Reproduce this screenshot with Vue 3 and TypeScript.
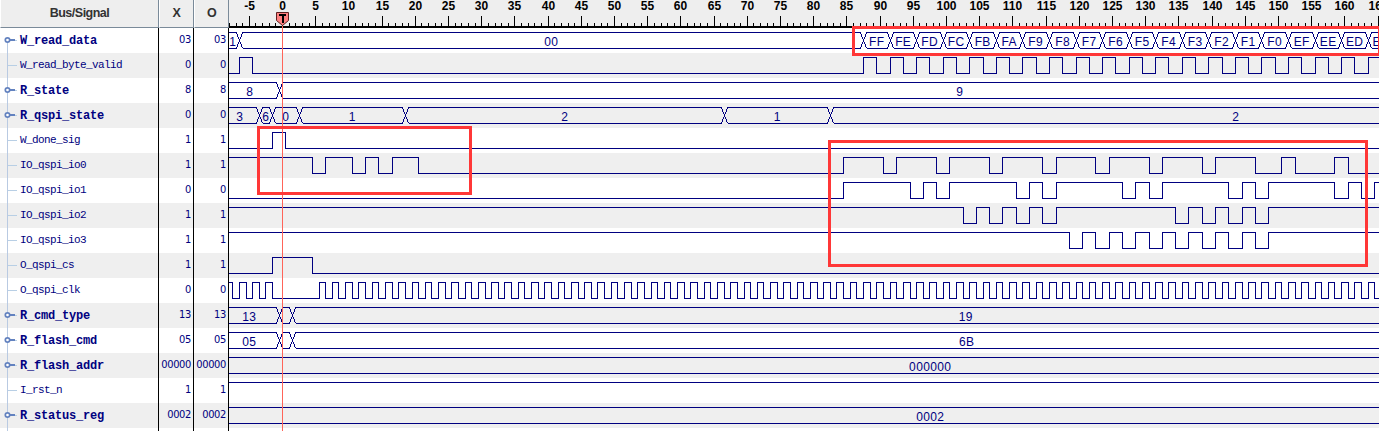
<script setup lang="ts">
interface Label { at: number; text: string }
interface Signal {
  name: string
  value: string
  kind: 'bus' | 'line'
  start?: number
  edges: number[]
  labels?: Label[]
}

const LEFT = 229
const WIDTH = 1150
const px = (t: number): number => Math.round(282.04 + 6.64 * t) - LEFT

const range = (from: number, to: number, step: number): number[] => {
  const out: number[] = []
  for (let t = from; t <= to; t += step) out.push(t)
  return out
}

const byteEdges = range(87.5, 163.5, 4)
const byteLabels: Label[] = byteEdges.map((t, i) => ({
  at: LEFT + (px(t) + px(t + 4)) / 2,
  text: (255 - i).toString(16).toUpperCase(),
}))

const signals: Signal[] = [
  { name: 'W_read_data', value: '03', kind: 'bus', edges: [-6.5, ...byteEdges], labels: [{ at: 232.5, text: '1' }, { at: 551, text: '00' }, ...byteLabels] },
  { name: 'W_read_byte_valid', value: '0', kind: 'line', start: 0, edges: [-6.5, -4.5, ...range(87.5, 165, 2)] },
  { name: 'R_state', value: '8', kind: 'bus', edges: [-0.5], labels: [{ at: 249.5, text: '8' }, { at: 959.5, text: '9' }] },
  { name: 'R_qspi_state', value: '0', kind: 'bus', edges: [-3.5, -1.5, 2.5, 18.5, 66.5, 82.5], labels: [{ at: 239.5, text: '3' }, { at: 265.5, text: '6' }, { at: 285.5, text: '0' }, { at: 352, text: '1' }, { at: 564.5, text: '2' }, { at: 777, text: '1' }, { at: 1235.5, text: '2' }] },
  { name: 'W_done_sig', value: '1', kind: 'line', start: 0, edges: [-1.5, 0.5] },
  { name: 'IO_qspi_io0', value: '1', kind: 'line', start: 1, edges: [4.5, 6.5, 10.5, 12.5, 14.5, 16.5, 20.5, 84.5, 90.5, 92.5, 98.5, 100.5, 106.5, 108.5, 114.5, 116.5, 122.5, 124.5, 130.5, 132.5, 138.5, 140.5, 146.5, 150.5, 152.5, 158.5, 160.5] },
  { name: 'IO_qspi_io1', value: '0', kind: 'line', start: 0, edges: [84.5, 94.5, 96.5, 98.5, 100.5, 110.5, 112.5, 114.5, 116.5, 126.5, 128.5, 130.5, 132.5, 142.5, 144.5, 146.5, 148.5, 158.5, 160.5, 162.5, 164.5] },
  { name: 'IO_qspi_io2', value: '1', kind: 'line', start: 1, edges: [...range(102.5, 116.5, 2), ...range(134.5, 148.5, 2)] },
  { name: 'IO_qspi_io3', value: '1', kind: 'line', start: 1, edges: range(118.5, 148.5, 2) },
  { name: 'O_qspi_cs', value: '1', kind: 'line', start: 0, edges: [-1.5, 4.5] },
  { name: 'O_qspi_clk', value: '0', kind: 'line', start: 1, edges: [...range(-7.5, -1.5, 1), ...range(5.5, 164.5, 1)] },
  { name: 'R_cmd_type', value: '13', kind: 'bus', edges: [-0.5, 1.5], labels: [{ at: 249, text: '13' }, { at: 965.5, text: '19' }] },
  { name: 'R_flash_cmd', value: '05', kind: 'bus', edges: [-0.5, 1.5], labels: [{ at: 249, text: '05' }, { at: 966.5, text: '6B' }] },
  { name: 'R_flash_addr', value: '00000', kind: 'bus', edges: [], labels: [{ at: 930, text: '000000' }] },
  { name: 'I_rst_n', value: '1', kind: 'line', start: 1, edges: [] },
  { name: 'R_status_reg', value: '0002', kind: 'bus', edges: [], labels: [{ at: 930, text: '0002' }] },
]

const HI = 4.5
const LO = 20.5

function wavePath(s: Signal): string {
  if (s.kind === 'line') {
    let high = s.start === 1
    let d = `M-1 ${high ? HI : LO}`
    for (const t of s.edges) {
      high = !high
      d += `H${px(t) + 0.5}V${high ? HI : LO}`
    }
    return d + `H${WIDTH + 1}`
  }
  let d = ''
  let from = -1
  for (const t of s.edges) {
    const x = px(t) + 0.5
    d += `M${from} ${HI}H${x - 3}L${x - 2} ${HI + 3}L${x + 2} ${LO - 3}L${x + 3} ${LO}`
    d += `M${from} ${LO}H${x - 3}L${x - 2} ${LO - 3}L${x + 2} ${HI + 3}L${x + 3} ${HI}`
    from = x + 3
  }
  return d + `M${from} ${HI}H${WIDTH + 1}M${from} ${LO}H${WIDTH + 1}`
}

const ticks = range(-8, 165, 1).map((t) => ({ t, x: px(t), major: t % 5 === 0 }))
const majors = ticks.filter((k) => k.major)
</script>

<template>
  <div class="viewer">
    <div class="names">
      <div class="head">Bus/Signal</div>
      <div v-for="(s, i) in signals" :key="s.name" class="row name" :class="{ bus: s.kind === 'bus' }">
        <svg class="branch" width="20" height="25">
          <rect x="7" :y="i === 0 ? 12 : 0" width="1" height="25" fill="#b9cae2" />
          <rect x="8" y="12" width="9" height="1" fill="#b8cfe5" />
          <template v-if="s.kind === 'bus'">
            <rect x="9" y="11" width="6" height="2" fill="#6382bf" />
            <circle cx="7.5" cy="12" r="2.2" fill="#fff" stroke="#6382bf" stroke-width="1.7" />
          </template>
        </svg>
        <span>{{ s.name }}</span>
      </div>
      <div class="row rest"><i class="stem"></i></div>
    </div>
    <div v-for="c in ['X', 'O']" :key="c" class="values">
      <div class="head">{{ c }}</div>
      <div v-for="s in signals" :key="s.name" class="row value">{{ s.value }}</div>
    </div>
    <div class="waves">
      <svg class="ruler" width="1150" height="28">
        <g shape-rendering="crispEdges">
          <rect x="0" y="26" width="1150" height="2" fill="#000" />
          <rect v-for="k in ticks" :key="k.t" :x="k.x" :y="k.major ? 16 : 23" width="1" :height="k.major ? 10 : 3" fill="#000" />
        </g>
        <text v-for="k in majors" :key="k.t" :x="k.x + 0.5" y="10" text-anchor="middle">{{ k.t }}</text>
      </svg>
      <svg v-for="s in signals" :key="s.name" class="row wave" width="1150" height="25">
        <path :d="wavePath(s)" fill="none" stroke="#000080" stroke-width="1" shape-rendering="crispEdges" />
        <text v-for="(l, i) in s.labels" :key="i" :x="l.at - 229 + 0.2" y="18" text-anchor="middle">{{ l.text }}</text>
      </svg>
      <div class="cursor"></div>
      <svg class="flag" width="13" height="15">
        <path d="M0.5 0.5H12.5V8.5L6.5 13.5L0.5 8.5Z" fill="#ff8080" stroke="#5c2020" />
        <path d="M3 3H10M6.5 2V11" fill="none" stroke="#000" stroke-width="2" shape-rendering="crispEdges" />
      </svg>
    </div>
    <div class="mark mark-bytes"></div>
    <div class="mark mark-command"></div>
    <div class="mark mark-data"></div>
  </div>
</template>

<style>
body {
  margin: 0;
  overflow: hidden;
}
</style>

<style scoped>
.viewer {
  position: relative;
  display: flex;
  width: 1379px;
  height: 431px;
  overflow: hidden;
  background: #fff;
  font-family: "Liberation Sans", Arial, sans-serif;
  color: #000080;
}
.names,
.values {
  box-sizing: border-box;
  flex: none;
  border-right: 1px solid #000;
}
.names {
  width: 159px;
}
.values {
  width: 35px;
}
.head {
  box-sizing: border-box;
  height: 28px;
  margin-right: -1px;
  padding-top: 5px;
  border-right: 1px solid #7a8a99;
  border-bottom: 1px solid #7a8a99;
  border-left: 1px solid #fff;
  background: #eee;
  color: #333;
  font-size: 12.5px;
  font-weight: bold;
  line-height: 16px;
  text-align: center;
  letter-spacing: -0.5px;
}
.row {
  display: flex;
  height: 25px;
  align-items: center;
}
.row:nth-child(odd) {
  background: #efefef;
}
.rest {
  height: 3px;
}
.names .rest {
  background: #fff;
}
.stem {
  width: 1px;
  height: 3px;
  margin-left: 7px;
  background: #b9cae2;
}
.branch {
  flex: none;
}
.name {
  font-family: "Liberation Mono", monospace;
  font-size: 11px;
  letter-spacing: -0.6px;
  white-space: pre;
}
.name span {
  margin-bottom: 2px;
}
.name.bus {
  font-size: 12px;
  font-weight: bold;
  letter-spacing: -0.2px;
}
.name.bus span {
  margin-bottom: 0;
}
.value {
  box-sizing: border-box;
  justify-content: flex-end;
  padding-right: 2px;
  padding-bottom: 2px;
  font-family: "DejaVu Sans Condensed", "DejaVu Sans", sans-serif;
  font-size: 11px;
  font-stretch: condensed;
  letter-spacing: -0.35px;
}
.waves {
  position: relative;
  display: flex;
  flex: none;
  flex-direction: column;
  width: 1150px;
}
.ruler {
  display: block;
  flex: none;
  background: #eee;
  font-size: 12px;
  font-weight: bold;
}
.wave {
  display: block;
  flex: none;
  font-size: 12px;
  letter-spacing: 0.35px;
}
.wave text {
  fill: #000080;
}
.cursor {
  position: absolute;
  top: 26px;
  bottom: 0;
  left: 53px;
  width: 1px;
  background: #ff6459;
}
.flag {
  position: absolute;
  top: 12px;
  left: 47px;
}
.mark {
  position: absolute;
  box-sizing: border-box;
  border: 3px solid #ff3737;
}
.mark-bytes {
  top: 26px;
  left: 852px;
  width: 529px;
  height: 30px;
}
.mark-command {
  top: 126px;
  left: 257px;
  width: 215px;
  height: 69px;
}
.mark-data {
  top: 140px;
  left: 828px;
  width: 540px;
  height: 127px;
}
</style>
